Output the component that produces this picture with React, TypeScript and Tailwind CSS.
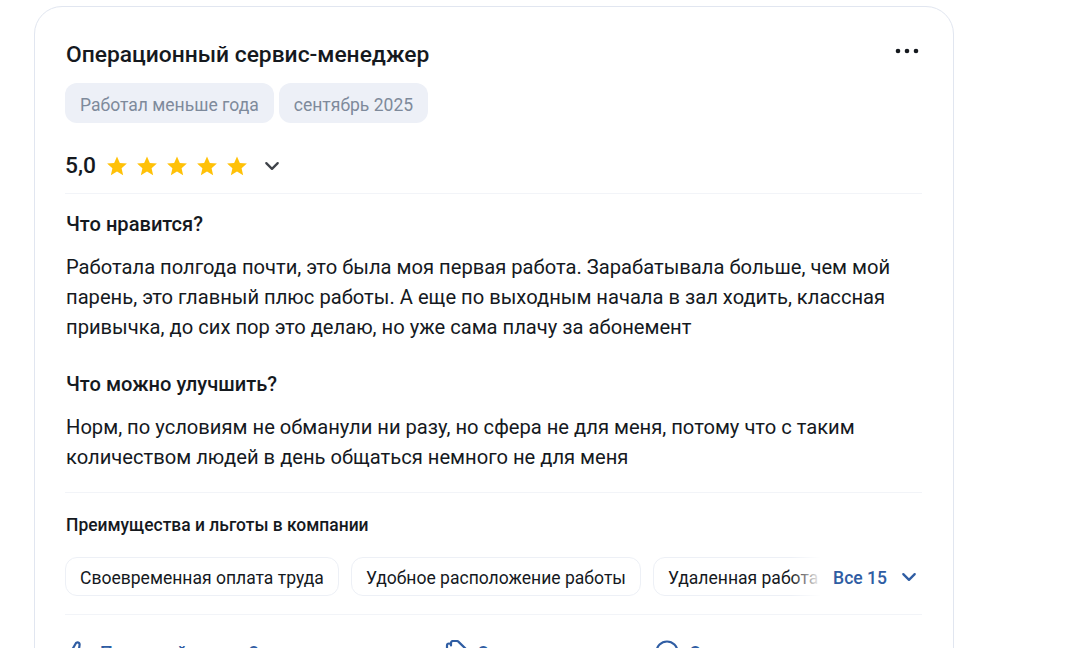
import React from "react";

const Star = () => (
  <svg width="22" height="22" viewBox="0 0 24 24" className="shrink-0 block">
    <path fill="#ffc107" d="M12 1.6l3.1 7.1 7.7.7-5.8 5.1 1.7 7.6L12 18.1 5.3 22.1 7 14.5 1.2 9.4l7.7-.7z" />
  </svg>
);

const Chevron = ({ color }: { color: string }) => (
  <svg width="16" height="16" viewBox="0 0 14 14" fill="none" className="block shrink-0">
    <path d="M2 4.500l5 5 5-5" stroke={color} strokeWidth="2" strokeLinecap="round" strokeLinejoin="round" />
  </svg>
);

const Chip = ({ children }: { children: React.ReactNode }) => (
  <div className="h-[39px] shrink-0 flex items-center pt-[4px] px-[14px] rounded-[12px] border border-[#edf0f6] bg-white text-[17.55px] text-[#15191e] whitespace-nowrap">
    {children}
  </div>
);

export default function App() {
  return (
    <div className="h-[648px] w-[1088px] overflow-hidden bg-white font-['Roboto',sans-serif]">
      <div className="ml-[34px] mt-[6px] w-[920px] h-[700px] rounded-[28px] border border-[#e1e6f0] bg-white pt-[32px] pl-[30px] pr-[31px]">
        <div className="flex items-start justify-between">
          <h2 className="ml-[1px] mt-[1px] -mb-[1px] text-[22.8px] leading-[30px] font-medium text-[#15191e]">Операционный сервис-менеджер</h2>
          <svg width="26" height="6" viewBox="0 0 26 6" className="block mt-[9px] mr-[2px]">
            <circle cx="4" cy="3" r="2.300" fill="#15191e" />
            <circle cx="13" cy="3" r="2.300" fill="#15191e" />
            <circle cx="22" cy="3" r="2.300" fill="#15191e" />
          </svg>
        </div>
        <div className="flex gap-[5px] mt-[14px]">
          <div className="h-[40px] flex items-center pt-[4px] px-[15px] rounded-[12px] bg-[#edf0f7] text-[17.55px] text-[#7e8a9b]">Работал меньше года</div>
          <div className="h-[40px] flex items-center pt-[4px] px-[15px] rounded-[12px] bg-[#edf0f7] text-[17.55px] text-[#7e8a9b]">сентябрь 2025</div>
        </div>
        <div className="flex items-center mt-[28px] h-[30px]">
          <span className="text-[22.8px] leading-[30px] font-medium text-[#15191e]">5,0</span>
          <div className="flex gap-[8px] ml-[10px]">
            <Star /><Star /><Star /><Star /><Star />
          </div>
          <div className="ml-[16px]"><Chevron color="#3f4349" /></div>
        </div>
        <div className="mt-[12px] border-t border-[#f2f4f8]" />
        <h3 className="ml-[1px] mt-[15px] text-[20.1px] leading-[30px] font-medium text-[#15191e]">Что нравится?</h3>
        <p className="ml-[1px] mt-[13px] text-[20.17px] leading-[30px] text-[#15191e]">
          Работала полгода почти, это была моя первая работа. Зарабатывала больше, чем мой<br />
          парень, это главный плюс работы. А еще по выходным начала в зал ходить, классная<br />
          привычка, до сих пор это делаю, но уже сама плачу за абонемент
        </p>
        <h3 className="ml-[1px] mt-[27px] text-[20.1px] leading-[30px] font-medium text-[#15191e]">Что можно улучшить?</h3>
        <p className="ml-[1px] mt-[13px] text-[20.17px] leading-[30px] text-[#15191e]">
          Норм, по условиям не обманули ни разу, но сфера не для меня, потому что с таким<br />
          количеством людей в день общаться немного не для меня
        </p>
        <div className="mt-[20px] border-t border-[#f2f4f8]" />
        <h4 className="ml-[1px] mt-[21px] text-[17.45px] leading-[22px] font-medium text-[#15191e]">Преимущества и льготы в компании</h4>
        <div className="relative mt-[21px] flex gap-[12px] overflow-hidden">
          <Chip>Своевременная оплата труда</Chip>
          <Chip>Удобное расположение работы</Chip>
          <Chip>Удаленная работа</Chip>
          <div className="absolute right-0 top-0 bottom-0 flex items-center bg-gradient-to-r from-transparent to-white to-[23%] pl-[42px] pr-[5px]">
            <div className="flex items-center gap-[14px] text-[17.55px] font-medium text-[#2f5da3]">
              <span className="pt-[4px]">Все 15</span>
              <Chevron color="#2f5da3" />
            </div>
          </div>
        </div>
        <div className="mt-[18px] border-t border-[#f2f4f8]" />
        <div className="flex items-center mt-[26px] text-[18px] leading-[24px] text-[#2f5da3] font-medium">
          <svg width="24" height="24" viewBox="0 0 24 24" fill="none" stroke="#2f5da3" strokeWidth="2.200" className="block shrink-0 -mt-[3px]">
            <path d="M7 10v11M7 10l4-7c2.500-1.500 4 .5 3.500 2.500L14 9h6a2 2 0 012 2.400l-1.500 7.600A2 2 0 0118.500 21H3V10z" />
          </svg>
          <span className="ml-[11px] w-[345px] shrink-0">Полезный отзыв 3</span>
          <svg width="24" height="24" viewBox="0 0 24 24" fill="none" stroke="#2f5da3" strokeWidth="2.200" strokeLinejoin="round" className="block shrink-0 -mt-[3px]">
            <path d="M2 9V5.500a2 2 0 014 0V3a2 2 0 012-2h3.500c1 0 2 .5 2.600 1.400L22 10v9a2 2 0 01-2 2H6l-4-5z" />
          </svg>
          <span className="ml-[8px] w-[178px] shrink-0">Ответить</span>
          <svg width="24" height="24" viewBox="0 0 24 24" fill="none" stroke="#2f5da3" strokeWidth="2.200" className="block shrink-0 -mt-[3px]">
            <circle cx="12" cy="12" r="10.500" />
          </svg>
          <span className="ml-[10px]">Ответить</span>
        </div>
      </div>
    </div>
  );
}
